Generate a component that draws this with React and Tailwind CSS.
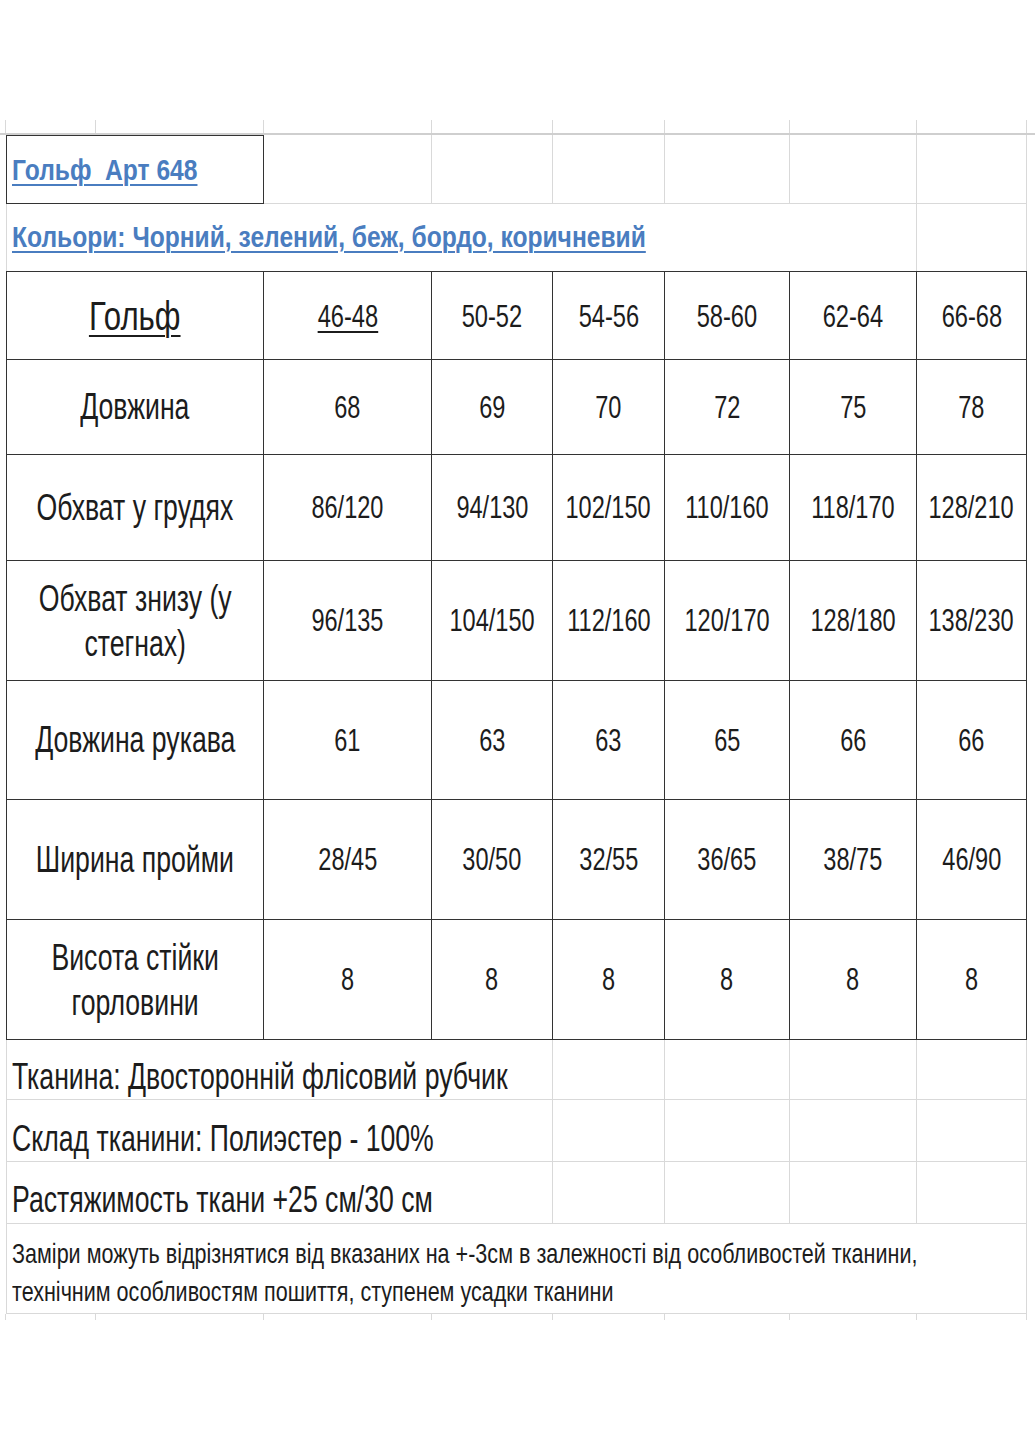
const font = { fontFamily: '"Liberation Sans", Arial, sans-serif' };

// text in the picture is horizontally squeezed, so every run gets a scale-x
function T({ className = "", children }) {
  return <span className={`inline-block whitespace-nowrap ${className}`}>{children}</span>;
}

const sizes = ["46-48", "50-52", "54-56", "58-60", "62-64", "66-68"];

const rows = [
  { label: ["Довжина"], h: "h-[95px]", vals: ["68", "69", "70", "72", "75", "78"] },
  { label: ["Обхват у грудях"], h: "h-[106px]", vals: ["86/120", "94/130", "102/150", "110/160", "118/170", "128/210"] },
  { label: ["Обхват знизу (у", "стегнах)"], h: "h-[120px]", vals: ["96/135", "104/150", "112/160", "120/170", "128/180", "138/230"] },
  { label: ["Довжина рукава"], h: "h-[119px]", vals: ["61", "63", "63", "65", "66", "66"] },
  { label: ["Ширина пройми"], h: "h-[120px]", vals: ["28/45", "30/50", "32/55", "36/65", "38/75", "46/90"] },
  { label: ["Висота стійки", "горловини"], h: "h-[120px]", vals: ["8", "8", "8", "8", "8", "8"] },
];

const colW = ["w-[168px]", "w-[121px]", "w-[112px]", "w-[125px]", "w-[127px]", "w-[110px]"];

function Stubs({ h }) {
  return (
    <div className={`flex ${h}`}>
      <div className="w-[6px] border-r border-[#d9d9d9]" />
      <div className="w-[90px] border-r border-[#d9d9d9]" />
      <div className="w-[168px] border-r border-[#d9d9d9]" />
      <div className="w-[168px] border-r border-[#d9d9d9]" />
      <div className="w-[121px] border-r border-[#d9d9d9]" />
      <div className="w-[112px] border-r border-[#d9d9d9]" />
      <div className="w-[125px] border-r border-[#d9d9d9]" />
      <div className="w-[127px] border-r border-[#d9d9d9]" />
      <div className="w-[110px] border-r border-[#d9d9d9]" />
    </div>
  );
}

function NoteRow({ h, pb, children }) {
  return (
    <div className={`flex ${h}`}>
      <div className="w-[6px]" />
      <div className={`w-[547px] border-l border-r border-b border-[#d9d9d9] flex items-end pl-[5px] ${pb}`}>
        <T className="origin-left scale-x-[0.74] text-[36px] leading-none">{children}</T>
      </div>
      <div className="w-[112px] border-r border-b border-[#d9d9d9]" />
      <div className="w-[125px] border-r border-b border-[#d9d9d9]" />
      <div className="w-[127px] border-r border-b border-[#d9d9d9]" />
      <div className="w-[110px] border-r border-b border-[#d9d9d9]" />
    </div>
  );
}

export default function App() {
  return (
    <div className="w-[1035px] h-[1440px] bg-white text-[#1c1c1c] overflow-hidden" style={font}>
      <div className="h-[120px]" />
      <Stubs h="h-[13px]" />
      <div className="h-[2px] bg-[#cfcfcf]" />

      {/* title row */}
      <div className="flex h-[69px]">
        <div className="w-[6px]" />
        <div className="w-[258px] border border-[#333] flex items-center pl-[5px]">
          <T className="origin-left scale-x-[0.82] text-[30px] leading-none font-bold text-[#4a7dc0] underline decoration-2 underline-offset-[4px]">
            Гольф&nbsp;&nbsp;Арт 648
          </T>
        </div>
        <div className="w-[168px] border-r border-b border-[#d9d9d9]" />
        <div className="w-[121px] border-r border-b border-[#d9d9d9]" />
        <div className="w-[112px] border-r border-b border-[#d9d9d9]" />
        <div className="w-[125px] border-r border-b border-[#d9d9d9]" />
        <div className="w-[127px] border-r border-b border-[#d9d9d9]" />
        <div className="w-[110px] border-r border-b border-[#d9d9d9]" />
      </div>

      {/* colours row */}
      <div className="flex h-[67px]">
        <div className="w-[6px]" />
        <div className="w-[911px] border-l border-r border-[#d9d9d9] flex items-center pl-[5px] pb-[2px]">
          <T className="origin-left scale-x-[0.82] text-[30px] leading-none font-bold text-[#4a7dc0] underline decoration-2 underline-offset-[4px]">
            Кольори: Чорний, зелений, беж, бордо, коричневий
          </T>
        </div>
        <div className="w-[110px] border-r border-[#d9d9d9]" />
      </div>

      {/* size table */}
      <div className="ml-[6px] w-[1021px] border-l border-t border-[#333]">
        <div className="flex h-[88px]">
          <div className="w-[257px] border-r border-b border-[#333] flex items-center justify-center">
            <T className="scale-x-[0.78] text-[40px] leading-none underline decoration-2 underline-offset-[5px]">Гольф</T>
          </div>
          {sizes.map((s, i) => (
            <div key={s} className={`${colW[i]} border-r border-b border-[#333] flex items-center justify-center`}>
              <T className={`scale-x-[0.74] text-[32px] leading-none ${i === 0 ? "underline decoration-2 underline-offset-[4px]" : ""}`}>{s}</T>
            </div>
          ))}
        </div>
        {rows.map((r) => (
          <div key={r.label[0]} className={`flex ${r.h}`}>
            <div className="w-[257px] border-r border-b border-[#333] flex items-center justify-center">
              <T className={`scale-x-[0.74] text-[36px] text-center ${r.label.length > 1 ? "leading-[45px]" : "leading-none"}`}>
                {r.label.map((l, i) => (
                  <span key={i} className="block">{l}</span>
                ))}
              </T>
            </div>
            {r.vals.map((v, i) => (
              <div key={i} className={`${colW[i]} border-r border-b border-[#333] flex items-center justify-center`}>
                <T className="scale-x-[0.76] text-[31px] leading-none">{v}</T>
              </div>
            ))}
          </div>
        ))}
      </div>

      {/* notes */}
      <NoteRow h="h-[60px]" pb="pb-[4px]">Тканина: Двосторонній флісовий рубчик</NoteRow>
      <NoteRow h="h-[62px]" pb="pb-[4px]">Склад тканини: Полиэстер - 100%</NoteRow>
      <NoteRow h="h-[62px]" pb="pb-[5px]">Растяжимость ткани +25 см/30 см</NoteRow>
      <div className="flex h-[90px]">
        <div className="w-[6px]" />
        <div className="w-[1021px] border-l border-r border-b border-[#d9d9d9] pl-[5px] pt-[11px]">
          <T className="origin-left scale-x-[0.77] text-[28px] leading-[38px]">
            <span className="block">
              Заміри можуть відрізнятися від вказаних на +-3см в залежності від особливостей тканини,
            </span>
            <span className="block">технічним особливостям пошиття, ступенем усадки тканини</span>
          </T>
        </div>
      </div>
      <Stubs h="h-[6px]" />
    </div>
  );
}
